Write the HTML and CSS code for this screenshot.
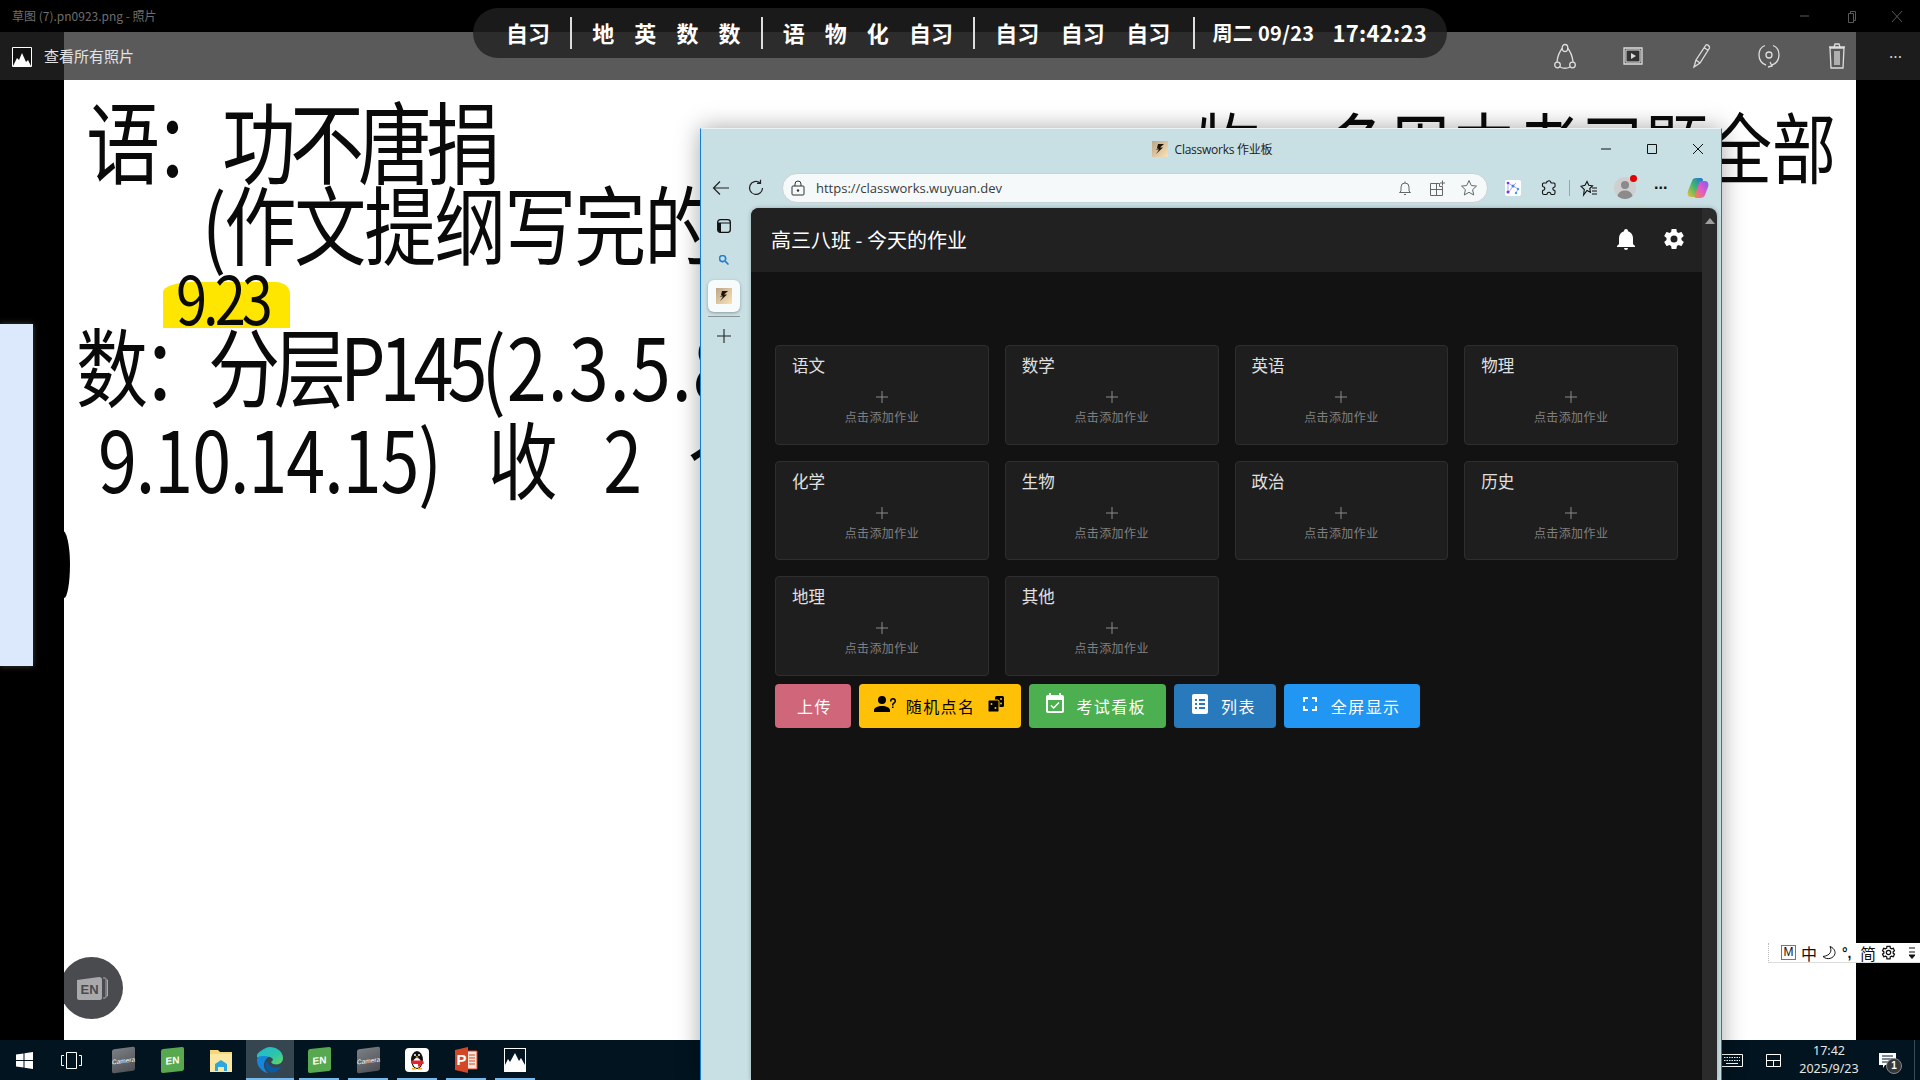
FILE: index.html
```html
<!DOCTYPE html>
<html lang="zh-CN">
<head>
<meta charset="utf-8">
<title>Classworks 作业板</title>
<link rel="stylesheet" href="styles.css">
</head>
<body>
<div class="desk">
  <div class="photos">
    <div class="ph-title">
      <span class="ph-name">草图 (7).pn0923.png - 照片</span>
      <div class="ph-ctrl">
        <svg width="46" height="32" viewBox="0 0 46 32"><path d="M18 16h9" stroke="#5a5a5a" fill="none"/></svg>
        <svg width="46" height="32" viewBox="0 0 46 32"><path d="M20.500 13.500h5v9h-5zM22.500 13.500v-2h5v9h-2" stroke="#5a5a5a" fill="none"/></svg>
        <svg width="46" height="32" viewBox="0 0 46 32"><path d="M18 11l10 11M28 11l-10 11" stroke="#5a5a5a" fill="none"/></svg>
      </div>
    </div>
    <div class="ph-bar">
      <div class="ph-side ph-left">
        <svg width="20" height="20" viewBox="0 0 20 20"><path d="M.5 .5h19v19H.5z" fill="#111" stroke="#fff"/><path d="M1 19l4-8 2 2 3-7 4 9 2-2 3 6z" fill="#fff"/></svg>
        <span class="ph-all">查看所有照片</span>
      </div>
      <div class="ph-mid">
        <svg class="tool" width="24" height="28" viewBox="0 0 24 28"><path d="M9.500 6C6 10 4.500 15 4 20M14.500 6C18 10 19.500 15 20 20M7 25c3 1.500 7 1.500 10 0" stroke="#ddd" fill="none" stroke-width="1.300"/><ellipse cx="12" cy="6" rx="2.800" ry="3.500" stroke="#ddd" fill="none" stroke-width="1.300"/><circle cx="4.500" cy="23" r="2.800" stroke="#ddd" fill="none" stroke-width="1.300"/><circle cx="19.500" cy="23" r="2.800" stroke="#ddd" fill="none" stroke-width="1.300"/></svg>
        <svg class="tool" width="24" height="28" viewBox="0 0 24 28"><path d="M3 6h18v16H3z" stroke="#ddd" fill="none" stroke-width="1.300"/><path d="M5 8h14v12H5z" fill="#333" stroke="#ddd"/><path d="M10 11l5 3-5 3z" fill="#ddd"/></svg>
        <svg class="tool" width="24" height="28" viewBox="0 0 24 28"><path d="M5 25l2-7L17 3c1-1 4 1 3.500 3L11 21zM7 18l4 3M15.500 6l4 2.500" stroke="#ddd" fill="none" stroke-width="1.300"/></svg>
        <svg class="tool" width="24" height="28" viewBox="0 0 24 28"><path d="M16 3.500C20 5 22 9 22 13c0 5-3 9-7 10M8 3.500C4 5 2 9 2 13c0 5 3 9 7 10M13 20l2 4-4 1" stroke="#ddd" fill="none" stroke-width="1.300"/><circle cx="12" cy="13" r="3" stroke="#ddd" fill="none" stroke-width="1.300"/></svg>
        <svg class="tool" width="24" height="28" viewBox="0 0 24 28"><path d="M5 6h14l-1 20H6zM4 5h16M9 5l1-3h4l1 3M10 9v14M12 9v14M14 9v14" stroke="#ddd" fill="none" stroke-width="1.300"/></svg>
      </div>
      <div class="ph-side ph-right"><span class="ph-more">...</span></div>
    </div>
    <div class="ph-view">
      <div class="board">
        <span class="ink ink-1">语：功不唐捐</span>
        <span class="ink ink-2">(作文提纲写完的</span>
        <span class="mark"></span>
        <span class="ink ink-date">9.23</span>
        <span class="ink ink-3">数：分层P145<span class="ink-wide">(2.3.5.8</span></span>
        <span class="ink ink-4">9.10.14.15) 收 2 个</span>
        <span class="ink ink-5">物：多周中考习题全部</span>
        <span class="en-ball">
          <svg width="34" height="30" viewBox="0 0 34 30"><path d="M28 5h2a1 1 0 0 1 1 1v18a1 1 0 0 1-1 1h-2M31.500 7h1v16h-1" stroke="#a9a9ab" fill="none"/><path d="M2 7l22-3c2 0 3 1 3 3v18c0 1-1 2-2 2H4c-1 0-2-1-2-2z" fill="#a9a9ab"/><text class="en-ball-t" x="14.500" y="21" text-anchor="middle">EN</text></svg>
        </span>
      </div>
    </div>
    <div class="taskbar">
      <div class="tb-btn">
        <svg width="17" height="17" viewBox="0 0 17 17"><path d="M0 2.500L7.500 1.400v6.600H0zM8.500 1.300L17 0v8H8.500zM0 9h7.500v6.600L0 14.500zM8.500 9H17v8l-8.500-1.300z" fill="#fff"/></svg>
      </div>
      <div class="tb-btn">
        <svg width="21" height="17" viewBox="0 0 21 17"><path d="M5.500 .5h10v16h-10zM3 3.500H.5v10H3M18 3.500h2.500v10H18" stroke="#fff" fill="none"/></svg>
      </div>
      <div class="tb-btn"><span class="tile-cam">Camera</span></div>
      <div class="tb-btn"><span class="tile-en">EN</span></div>
      <div class="tb-btn">
        <svg width="22" height="24" viewBox="0 0 22 24"><path d="M0 2h8l2 2h12v20H0z" fill="#f5d77b"/><path d="M0 6h22v18H0z" fill="#fbe6a2"/><path d="M5 23v-7l6-4 6 4v7h-3v-4H8v4z" fill="#2ea7e0"/></svg>
      </div>
      <div class="tb-btn tb-on tb-active">
        <svg width="26" height="26" viewBox="0 0 24 24"><defs><linearGradient id="eg" x1="0" y1="0" x2="1" y2="1"><stop offset="0" stop-color="#1cb8d8"/><stop offset=".6" stop-color="#2ec6a8"/><stop offset="1" stop-color="#6ad85a"/></linearGradient></defs><path fill="#0b5aa8" d="M21.860 17.860q.14 0 .25.12.1.13.1.25t-.11.33l-.32.46-.43.53-.44.5q-.21.25-.38.42l-.22.23q-.58.53-1.340 1.040-.76.51-1.600.91-.86.4-1.740.64t-1.670.24q-.9 0-1.690-.28-.8-.28-1.480-.78-.68-.5-1.220-1.170-.53-.66-.92-1.440-.38-.77-.58-1.600-.2-.83-.2-1.670 0-1 .32-1.960.33-.97.87-1.800.14.95.55 1.770.41.82 1.020 1.500.6.68 1.380 1.210.78.54 1.640.9.86.36 1.770.56.92.2 1.800.2 1.120 0 2.180-.24 1.060-.23 2.060-.72l.2-.1.2-.05z"/><path fill="#1586dc" d="M6.360 16.590q0 1.100.27 2.150.27 1.060.78 2.030.51.96 1.240 1.770.74.82 1.660 1.400-1.470-.2-2.800-.74-1.330-.55-2.480-1.370-1.150-.83-2.080-1.900-.92-1.070-1.580-2.330T.36 14.940Q0 13.540 0 12.060q0-.81.32-1.490.31-.68.83-1.230.53-.55 1.200-.96.66-.4 1.350-.66.74-.27 1.500-.39.78-.12 1.550-.12.7 0 1.420.1.72.12 1.400.35.68.23 1.320.57.63.35 1.160.83-.35 0-.7.07-.33.07-.65.23v-.02q-.63.28-1.200.74-.57.46-1.050 1.040-.48.58-.87 1.260-.38.67-.65 1.390-.27.71-.42 1.440-.15.72-.15 1.380z"/><path fill="url(#eg)" d="M11.960.06q1.700 0 3.330.39 1.630.38 3.070 1.150 1.430.77 2.620 1.930 1.180 1.160 1.980 2.700.49.94.76 1.960.28 1 .28 2.080 0 .89-.23 1.700-.24.8-.69 1.480-.45.68-1.100 1.220-.64.53-1.450.88-.54.24-1.110.36-.58.13-1.160.13-.42 0-.97-.03-.54-.03-1.100-.12-.55-.09-1.090-.25-.53-.17-.95-.43-.42-.28-.7-.6-.26-.34-.26-.71 0-.3.18-.56.18-.26.39-.44.21-.18.4-.27.18-.1.2-.15.3-.3.3-.7 0-.67-.5-1.200-.5-.52-1.300-.92-.8-.41-1.800-.69-1-.28-2-.43-.98-.15-1.880-.2-.9-.06-1.500-.06-1.130 0-2.260.23-1.140.22-2.180.67t-1.950 1.100q-.9.65-1.630 1.500.6-2.260 1.830-4.130 1.220-1.860 2.970-3.200Q6.400 1.600 8.260.86q1.870-.74 3.700-.8z"/></svg>
      </div>
      <div class="tb-btn tb-on"><span class="tile-en">EN</span></div>
      <div class="tb-btn tb-on"><span class="tile-cam">Camera</span></div>
      <div class="tb-btn tb-on">
        <svg width="24" height="24" viewBox="0 0 24 24"><rect width="24" height="24" rx="4" fill="#fff"/><ellipse cx="12" cy="12" rx="6" ry="9" fill="#111"/><ellipse cx="12" cy="15" rx="4" ry="5" fill="#fff"/><circle cx="10" cy="7" r="1" fill="#fff"/><circle cx="14" cy="7" r="1" fill="#fff"/><path d="M6 12.500h12l1 3-3 1-1 2h-2v-2.500H7z" fill="#e3262e"/><path d="M10.500 9l1.500-1 1.500 1-1.500 1z" fill="#f5a623"/><path d="M7 20h4v1.500H7zM13 20h4v1.500h-4z" fill="#f5a623"/></svg>
      </div>
      <div class="tb-btn tb-on">
        <svg width="23" height="26" viewBox="0 0 23 26"><path d="M9 4h13v18H9z" fill="#fbe4da" stroke="#d24726"/><path d="M14 8h6M14 11h6M14 14h6M14 17h6" stroke="#d24726"/><path d="M0 3l13-3v26L0 23z" fill="#d24726"/><text class="ppt-p" x="6.500" y="18" text-anchor="middle">P</text></svg>
      </div>
      <div class="tb-btn tb-on">
        <svg width="22" height="24" viewBox="0 0 22 24"><path d="M0 0h22v24H0z" fill="#fff"/><path d="M1 1h20v16l-4-7-2 3-4-8-5 9-2-3-3 6z" fill="#02141f"/></svg>
      </div>
      <div class="tb-tray">
        <svg width="22" height="13" viewBox="0 0 22 13"><path d="M.5 .5h21v12H.5z" stroke="#fff" fill="none"/><path d="M3 3.500h16M3 6.500h16" stroke="#fff" stroke-dasharray="1.500 1"/><path d="M5 9.500h12" stroke="#fff"/></svg>
        <svg class="tray-pad" width="15" height="13" viewBox="0 0 15 13"><path d="M.5 .5h14v12H.5zM.5 6.500h14M7.500 6.500v6" stroke="#fff" fill="none"/></svg>
        <div class="clock"><span>17:42</span><span>2025/9/23</span></div>
        <div class="note">
          <svg width="17" height="15" viewBox="0 0 17 15"><path d="M0 0h17v12H6l-2 3v-3H0z" fill="#fff"/><path d="M3 3h11M3 6h11M3 9h7" stroke="#02141f"/></svg>
          <span class="note-badge">1</span>
        </div>
        <span class="tray-line"></span>
      </div>
    </div>
  </div>

  <div class="side-tab"></div>
  <div class="blot"></div>

  <div class="capsule">
    <span class="cls two">自习</span><i class="sep"></i>
    <span class="cls">地</span><span class="cls">英</span><span class="cls">数</span><span class="cls">数</span><i class="sep"></i>
    <span class="cls">语</span><span class="cls">物</span><span class="cls">化</span><span class="cls two">自习</span><i class="sep"></i>
    <span class="cls two">自习</span><span class="cls two">自习</span><span class="cls two">自习</span><i class="sep sep-last"></i>
    <span class="date">周二 09/23</span><span class="time">17:42:23</span>
  </div>

  <div class="ime">
    <span class="ime-m">M</span><span class="ime-c">中</span>
    <svg width="14" height="14" viewBox="0 0 14 14"><path d="M8 .5c2 4 1 9-7 10 4 4 11 2 12-3 .5-3-2-6-5-7z" fill="none" stroke="#111"/></svg>
    <span class="ime-p">°,</span><span class="ime-c">简</span>
    <svg width="15" height="15" viewBox="0 0 24 24"><path fill="none" stroke="#111" stroke-width="2" d="M12,15.500A3.500,3.500 0 1,1 12,8.500A3.500,3.500 0 1,1 12,15.500M19.430,12.970C19.500,12.300 19.500,11.700 19.430,11L21.540,9.370L19.660,5.270L16.560,6.050C16,5.660 15.500,5.320 14.870,5.070L14.500,2H9.500L9.130,5.070C8.500,5.320 8,5.660 7.440,6.050L4.340,5.270L2.460,9.370L4.570,11C4.500,11.700 4.500,12.300 4.570,12.970L2.460,14.630L4.340,18.730L7.440,17.940C8,18.340 8.500,18.680 9.130,18.930L9.500,22H14.500L14.870,18.930C15.500,18.670 16,18.340 16.560,17.940L19.660,18.730L21.540,14.630Z"/></svg>
    <svg class="ime-menu" width="6" height="12" viewBox="0 0 6 12"><path d="M0 1h6M0 5h6M0 8h6l-3 3.500z" fill="#111" stroke="#111"/></svg>
  </div>

  <div class="browser">
    <div class="br-title">
      <svg class="fav" width="16" height="16" viewBox="0 0 16 16"><defs><linearGradient id="fa" x1="0" y1="0" x2="1" y2="1"><stop offset="0" stop-color="#bda689"/><stop offset="1" stop-color="#fbe2b6"/></linearGradient></defs><rect width="16" height="16" fill="url(#fa)"/><path d="M6 3h6L8 6.500h3L4 13l3-4.500H3.500l3-1.500H5z" fill="#1a1408"/></svg>
      <span class="br-name">Classworks 作业板</span>
      <div class="br-ctrl">
        <svg width="46" height="20" viewBox="0 0 46 20"><path d="M18 10h10" stroke="#111" fill="none"/></svg>
        <svg width="46" height="20" viewBox="0 0 46 20"><path d="M18.500 5.500h9v9h-9z" stroke="#111" fill="none"/></svg>
        <svg width="46" height="20" viewBox="0 0 46 20"><path d="M18 5l10 10M28 5L18 15" stroke="#111" fill="none"/></svg>
      </div>
    </div>
    <div class="br-tools">
      <svg width="18" height="16" viewBox="0 0 18 16"><path d="M17 8H2M8 1.500L1.500 8 8 14.500" stroke="#222" fill="none" stroke-width="1.200"/></svg>
      <svg class="reload" width="18" height="18" viewBox="0 0 18 18"><path d="M15.500 9A6.500 6.500 0 1 1 13 3.800M13.500 .8v3.500H10" stroke="#222" fill="none" stroke-width="1.200"/></svg>
      <div class="addr">
        <svg width="14" height="16" viewBox="0 0 14 16"><path d="M2 6h10a1 1 0 0 1 1 1v7a1 1 0 0 1-1 1H2a1 1 0 0 1-1-1V7a1 1 0 0 1 1-1zM4 6V4a3 3 0 0 1 6 0v2" stroke="#333" fill="none"/><circle cx="7" cy="10.500" r="1.200" fill="#333"/></svg>
        <span class="url">https://classworks.wuyuan.dev</span>
        <span class="addr-gap"></span>
        <svg width="14" height="16" viewBox="0 0 14 16"><path d="M3 11V7a4 4 0 0 1 8 0v4l1.500 1.500h-11zM6 14.500h2M7 3V1.500" stroke="#666" fill="none"/></svg>
        <svg class="addr-i addr-first" width="16" height="16" viewBox="0 0 16 16"><path d="M.5 3.500h9v3h3v9h-12zM.5 9.500h12M6.500 3.500v12M12.500 .5v5M10 3h5" stroke="#666" fill="none"/></svg>
        <svg class="addr-i" width="18" height="18" viewBox="0 0 18 18"><path d="M9 1.500l2.300 5 5.200.6-3.900 3.600 1.100 5.300L9 13.300 4.300 16l1.100-5.300L1.500 7.100l5.200-.6z" stroke="#666" fill="none"/></svg>
      </div>
      <svg class="ext-net" width="16" height="16" viewBox="0 0 16 16"><rect width="16" height="16" rx="2" fill="#fff"/><path d="M3 3l5 3-4 6M8 6l5 3-2 4M3 3v9M8 6l3-3" stroke="#7b6ce6" stroke-width=".6" fill="none"/><circle cx="3" cy="3" r="1.300" fill="#6a3de8"/><circle cx="8" cy="6" r="1.500" fill="#3d86f5"/><circle cx="3" cy="12" r="1.500" fill="#6a3de8"/><circle cx="13" cy="9" r="1.200" fill="#3d9cf5"/><circle cx="11" cy="13" r="1.200" fill="#3d9cf5"/></svg>
      <svg class="puzzle" width="16" height="16" viewBox="0 0 16 16"><path d="M6.500 1.500a2 2 0 0 1 3 0c.5 1 0 1.500 1 1.500h2.500c1 0 1 1 1 1v2.500c0 1-1 .5-1.500 1a1.500 1.500 0 0 0 0 2.500c.5.500 1.500 0 1.500 1v2c0 .8-.8 1.500-1.500 1.500h-2c-1 0-.5-1-1-1.500a1.800 1.800 0 0 0-3 0c-.5.500 0 1.500-1 1.500H3c-.8 0-1.500-.7-1.500-1.500V11c0-1 1-.5 1.500-1a1.800 1.800 0 0 0 0-3c-.5-.5-1.500 0-1.500-1V4c0-.5.500-1 1-1h2.500c1 0 .5-.5 1-1.500z" stroke="#111" fill="none" stroke-width="1.100"/></svg>
      <i class="tool-sep"></i>
      <svg class="favs" width="18" height="17" viewBox="0 0 18 17"><path d="M7 1.500l1.800 3.800 3.700.5-2.700 2.700.6 3.700L7 10.500 3.600 15l.7-5.500L1 6.300l4-1zM12 8h5M12 11h5M12 14h5" stroke="#111" fill="none" stroke-width="1.100"/></svg>
      <div class="avatar"><svg width="22" height="22" viewBox="0 0 22 22"><circle cx="11" cy="11" r="11" fill="#cfcfcf"/><circle cx="11" cy="8" r="4" fill="#8b8b8b"/><path d="M3.500 19c1-4 4-5.500 7.500-5.500s6.500 1.500 7.500 5.500c-2 2-5 3-7.500 3s-5.500-1-7.500-3z" fill="#8b8b8b"/></svg><span class="red-dot"></span></div>
      <span class="more">...</span>
      <svg class="copilot" width="22" height="22" viewBox="0 0 22 22"><defs><linearGradient id="c1" x1="0" y1="1" x2="1" y2="0"><stop offset="0" stop-color="#f2c035"/><stop offset=".5" stop-color="#3fb56e"/><stop offset="1" stop-color="#1f6fe0"/></linearGradient><linearGradient id="c2" x1="0" y1="1" x2="1" y2="0"><stop offset="0" stop-color="#f58a3c"/><stop offset=".5" stop-color="#e05ac9"/><stop offset="1" stop-color="#7a5df0"/></linearGradient></defs><path d="M9 1h5c1 0 2 1 2 2l-4 12c-.5 2-2 5-4 5H4c-3 0-4-3-3-6L5 4c.5-2 2-3 4-3z" fill="url(#c1)"/><path d="M13 21H9c-1 0-2-1-1-3l4-12c.5-1 1-2 3-2h3c3 0 4 3 3 6l-3 8c-.5 2-2.500 3-5 3z" fill="url(#c2)"/></svg>
    </div>
    <div class="br-body">
      <div class="br-side">
        <svg width="14" height="14" viewBox="0 0 14 14"><rect x=".7" y=".7" width="12.600" height="12.600" rx="2.500" fill="#c8dfe3" stroke="#111" stroke-width="1.300"/><path d="M1 4h12" stroke="#111"/><path d="M1 4h3v9H3a2 2 0 0 1-2-2z" fill="#111"/></svg>
        <svg class="side-search" width="10" height="10" viewBox="3 3 18 18"><path fill="#1f7fd0" stroke="#1f7fd0" d="M9.500,3A6.500,6.500 0 0,1 16,9.500C16,11.110 15.410,12.590 14.440,13.730L14.710,14H15.500L20.500,19L19,20.500L14,15.500V14.710L13.730,14.440C12.590,15.410 11.110,16 9.500,16A6.500,6.500 0 0,1 3,9.500A6.500,6.500 0 0,1 9.500,3M9.500,5C7,5 5,7 5,9.500C5,12 7,14 9.500,14C12,14 14,12 14,9.500C14,7 12,5 9.500,5Z"/></svg>
        <div class="side-tile"><svg width="16" height="16" viewBox="0 0 16 16"><rect width="16" height="16" fill="url(#fa)"/><path d="M6 3h6L8 6.500h3L4 13l3-4.500H3.500l3-1.500H5z" fill="#1a1408"/></svg></div>
        <i class="side-line"></i>
        <svg class="side-plus" width="14" height="14" viewBox="0 0 14 14"><path d="M7 0v14M0 7h14" stroke="#222" stroke-width="1.100" fill="none"/></svg>
      </div>
      <div class="panel">
        <div class="app">
          <header class="appbar">
            <h1 class="app-title">高三八班 - 今天的作业</h1>
            <svg class="app-i" width="24" height="24" viewBox="0 0 24 24"><path fill="#fff" d="M21,19V20H3V19L5,17V11C5,7.900 7.030,5.170 10,4.290C10,4.190 10,4.100 10,4A2,2 0 0,1 12,2A2,2 0 0,1 14,4C14,4.100 14,4.190 14,4.290C16.970,5.170 19,7.900 19,11V17L21,19M14,21A2,2 0 0,1 12,23A2,2 0 0,1 10,21"/></svg>
            <svg class="app-i" width="24" height="24" viewBox="0 0 24 24"><path fill="#fff" d="M12,15.500A3.500,3.500 0 0,1 8.500,12A3.500,3.500 0 0,1 12,8.500A3.500,3.500 0 0,1 15.500,12A3.500,3.500 0 0,1 12,15.500M19.430,12.970C19.470,12.650 19.500,12.330 19.500,12C19.500,11.670 19.470,11.340 19.430,11L21.540,9.370C21.730,9.220 21.780,8.950 21.660,8.730L19.660,5.270C19.540,5.050 19.270,4.960 19.050,5.050L16.560,6.050C16.040,5.660 15.500,5.320 14.870,5.070L14.500,2.420C14.460,2.180 14.250,2 14,2H10C9.750,2 9.540,2.180 9.500,2.420L9.130,5.070C8.500,5.320 7.960,5.660 7.440,6.050L4.950,5.050C4.730,4.960 4.460,5.050 4.340,5.270L2.340,8.730C2.210,8.950 2.270,9.220 2.460,9.370L4.570,11C4.530,11.340 4.500,11.670 4.500,12C4.500,12.330 4.530,12.650 4.570,12.970L2.460,14.630C2.270,14.780 2.210,15.050 2.340,15.270L4.340,18.730C4.460,18.950 4.730,19.030 4.950,18.950L7.440,17.940C7.960,18.340 8.500,18.680 9.130,18.930L9.500,21.580C9.540,21.820 9.750,22 10,22H14C14.250,22 14.460,21.820 14.500,21.580L14.870,18.930C15.500,18.670 16.040,18.340 16.560,17.940L19.050,18.950C19.270,19.030 19.540,18.950 19.660,18.730L21.660,15.270C21.780,15.050 21.730,14.780 21.540,14.630L19.430,12.970Z"/></svg>
          </header>
          <main class="main">
            <div class="grid">
              <section class="card"><h2>语文</h2><div class="add"><svg width="12" height="12" viewBox="0 0 12 12"><path d="M6 0v12M0 6h12"/></svg><span>点击添加作业</span></div></section>
              <section class="card"><h2>数学</h2><div class="add"><svg width="12" height="12" viewBox="0 0 12 12"><path d="M6 0v12M0 6h12"/></svg><span>点击添加作业</span></div></section>
              <section class="card"><h2>英语</h2><div class="add"><svg width="12" height="12" viewBox="0 0 12 12"><path d="M6 0v12M0 6h12"/></svg><span>点击添加作业</span></div></section>
              <section class="card"><h2>物理</h2><div class="add"><svg width="12" height="12" viewBox="0 0 12 12"><path d="M6 0v12M0 6h12"/></svg><span>点击添加作业</span></div></section>
              <section class="card"><h2>化学</h2><div class="add"><svg width="12" height="12" viewBox="0 0 12 12"><path d="M6 0v12M0 6h12"/></svg><span>点击添加作业</span></div></section>
              <section class="card"><h2>生物</h2><div class="add"><svg width="12" height="12" viewBox="0 0 12 12"><path d="M6 0v12M0 6h12"/></svg><span>点击添加作业</span></div></section>
              <section class="card"><h2>政治</h2><div class="add"><svg width="12" height="12" viewBox="0 0 12 12"><path d="M6 0v12M0 6h12"/></svg><span>点击添加作业</span></div></section>
              <section class="card"><h2>历史</h2><div class="add"><svg width="12" height="12" viewBox="0 0 12 12"><path d="M6 0v12M0 6h12"/></svg><span>点击添加作业</span></div></section>
              <section class="card"><h2>地理</h2><div class="add"><svg width="12" height="12" viewBox="0 0 12 12"><path d="M6 0v12M0 6h12"/></svg><span>点击添加作业</span></div></section>
              <section class="card"><h2>其他</h2><div class="add"><svg width="12" height="12" viewBox="0 0 12 12"><path d="M6 0v12M0 6h12"/></svg><span>点击添加作业</span></div></section>
            </div>
            <div class="actions">
              <button class="btn b-pink"><span>上传</span></button>
              <button class="btn b-amber">
                <svg width="24" height="24" viewBox="0 0 24 24"><path fill="#000" d="M13,8A4,4 0 0,1 9,12A4,4 0 0,1 5,8A4,4 0 0,1 9,4A4,4 0 0,1 13,8M17,18V20H1V18C1,15.790 4.580,14 9,14C13.420,14 17,15.790 17,18M20.500,14.500V16H19V14.500H20.500M18.500,9.500H17V9A3,3 0 0,1 20,6A3,3 0 0,1 23,9C23,9.970 22.500,10.880 21.710,11.410L21.410,11.600C20.840,12 20.500,12.610 20.500,13.300V13.500H19V13.300C19,12.110 19.600,11 20.590,10.350L20.880,10.160C21.270,9.900 21.500,9.470 21.500,9A1.500,1.500 0 0,0 20,7.500A1.500,1.500 0 0,0 18.500,9V9.500Z"/></svg>
                <span class="lbl">随机点名</span>
                <svg class="dice" width="16" height="16" viewBox="0 0 16 16"><rect x="7" y="0" width="9" height="11" rx="1.500" fill="#000"/><rect x="0" y="4" width="11" height="12" rx="1.500" fill="#000" stroke="#ffc107"/><circle cx="3.500" cy="8" r="1" fill="#ffc107"/><circle cx="7.500" cy="12" r="1" fill="#ffc107"/><circle cx="13" cy="3" r="1" fill="#ffc107"/><circle cx="13" cy="7.500" r="1" fill="#ffc107"/></svg>
              </button>
              <button class="btn b-green">
                <svg width="24" height="24" viewBox="0 0 24 24"><path fill="#fff" d="M19,19H5V8H19M19,3H18V1H16V3H8V1H6V3H5C3.890,3 3,3.900 3,5V19A2,2 0 0,0 5,21H19A2,2 0 0,0 21,19V5A2,2 0 0,0 19,3M16.530,11.060L15.470,10L10.590,14.880L8.470,12.760L7.410,13.820L10.590,17L16.530,11.060Z"/></svg>
                <span class="lbl">考试看板</span>
              </button>
              <button class="btn b-blue">
                <svg width="24" height="24" viewBox="0 0 24 24"><path fill="#fff" fill-rule="evenodd" d="M6 2h12a2 2 0 0 1 2 2v16a2 2 0 0 1-2 2H6a2 2 0 0 1-2-2V4a2 2 0 0 1 2-2zM7 7v2h2V7zM11 7v2h6V7zM7 11v2h2v-2zM11 11v2h6v-2zM7 15v2h2v-2zM11 15v2h6v-2z"/></svg>
                <span class="lbl">列表</span>
              </button>
              <button class="btn b-sky">
                <svg width="24" height="24" viewBox="0 0 24 24"><path fill="#fff" d="M5,5H10V7H7V10H5V5M14,5H19V10H17V7H14V5M17,14H19V19H14V17H17V14M10,17V19H5V14H7V17H10Z"/></svg>
                <span class="lbl">全屏显示</span>
              </button>
            </div>
          </main>
        </div>
        <div class="scroll"><i class="scroll-up"></i></div>
      </div>
    </div>
  </div>
</div>
</body>
</html>
```
FILE: styles.css
```css
* { box-sizing: border-box; }
html, body { margin: 0; padding: 0; background: #000; }
body { font-family: "Noto Sans CJK SC", "Noto Sans", sans-serif; }
.desk { position: relative; width: 1920px; height: 1080px; overflow: hidden; background: #000; }

/* photos app */
.photos { display: flex; flex-direction: column; height: 100%; }
.ph-title { height: 32px; display: flex; align-items: center; justify-content: space-between; padding-left: 12px; }
.ph-name { font-size: 12px; color: #6e6e6e; margin-top: -2px; }
.ph-ctrl { display: flex; }
.ph-bar { height: 48px; display: flex; background: #5a5a5a; }
.ph-side { width: 64px; background: #1c1c1c; display: flex; align-items: center; position: relative; }
.ph-left { padding-left: 12px; padding-top: 2px; }
.ph-all { position: absolute; left: 44px; top: 13px; font-size: 15px; line-height: 22px; color: #e4e4e4; white-space: nowrap; }
.ph-right { justify-content: center; padding-left: 16px; }
.ph-more { color: #ccc; font: 700 12px "Liberation Sans", sans-serif; letter-spacing: 1px; margin-top: -4px; }
.ph-mid { flex: 1; display: flex; align-items: center; justify-content: flex-end; gap: 44px; padding-right: 7px; }
.ph-view { flex: 1; padding: 0 64px; min-height: 0; }
.board { position: relative; height: 100%; background: #fff; overflow: hidden; }
.ink { position: absolute; color: #0a0a0a; white-space: pre; line-height: 1; font-family: "Noto Sans CJK SC", sans-serif; transform: scaleY(1.2); }
.ink-1 { left: 22px; top: 22px; font-size: 74px; letter-spacing: -6px; }
.ink-2 { left: 138px; top: 106px; font-size: 72px; letter-spacing: -2px; }
.mark { position: absolute; left: 99px; top: 202px; width: 127px; height: 46px; background: #ffe600; border-radius: 30px 14px 0 0 / 10px 12px 0 0; }
.ink-date { left: 112px; top: 188px; font-size: 56px; letter-spacing: -4px; }
.ink-3 { left: 12px; top: 248px; font-size: 72px; letter-spacing: -6px; }
.ink-wide { letter-spacing: 1px; }
.ink-4 { left: 34px; top: 342px; font-size: 70px; letter-spacing: -1px; word-spacing: 32px; }
.ink-5 { left: 1132px; top: 32px; font-size: 64px; }
.en-ball { position: absolute; left: -4px; top: 877px; width: 63px; height: 62px; border-radius: 50%; background: #4a4b4f; display: flex; align-items: center; justify-content: center; }
.en-ball-t { font: 700 13px "Liberation Sans", sans-serif; fill: #4a4b4f; }

/* taskbar */
.taskbar { height: 40px; background: #02141f; display: flex; padding-left: 0; gap: 1px; position: relative; }
.tb-btn { width: 48px; height: 40px; display: flex; align-items: center; justify-content: center; position: relative; }
.tb-btn:nth-child(2) { margin-right: 1px; padding-right: 3px; }
.tb-on::after { content: ""; position: absolute; left: 4px; right: 4px; bottom: 0; height: 2px; background: #76b9ed; }
.tb-active { background: #364650; }
.tb-active::after { left: 0; right: 0; }
.tile-cam { width: 23px; height: 24px; background: linear-gradient(160deg, #7b7f84, #4c5055); border-radius: 2px; font: 6.500px "Liberation Sans", sans-serif; color: #fff; display: flex; align-items: center; justify-content: center; transform: skewY(-8deg); }
.tile-en { width: 23px; height: 24px; background: #57a84f; border-radius: 2px; font: 700 10px "Liberation Sans", sans-serif; color: #fff; display: flex; align-items: center; justify-content: center; transform: skewY(-6deg); }
.ppt-p { font: 700 15px "Liberation Sans", sans-serif; fill: #fff; }
.tb-tray { margin-left: auto; display: flex; align-items: center; color: #e6e6e6; }
.tray-pad { margin-left: 23px; }
.clock { width: 78px; margin-left: 9px; display: flex; flex-direction: column; align-items: center; font: 12.500px/18px "Noto Sans", sans-serif; }
.note { position: relative; width: 17px; height: 15px; margin-left: 11px; margin-right: 24px; }
.note svg { display: block; }
.note-badge { position: absolute; left: 7px; top: 5px; width: 16px; height: 16px; border-radius: 50%; background: #33393d; border: 1px solid #888; color: #fff; font: 700 10px/14px "Liberation Sans", sans-serif; text-align: center; }
.tray-line { position: absolute; right: 5px; top: 0; width: 1px; height: 40px; background: #3a4a55; }

/* left tab + blot */
.side-tab { position: absolute; left: 0; top: 324px; width: 33px; height: 342px; background: #dce9fd; box-shadow: 0 0 6px rgba(255, 255, 255, .25); }
.blot { position: absolute; left: 60px; top: 530px; width: 10px; height: 68px; background: #000; border-radius: 0 80% 60% 0 / 0 50% 50% 0; }

/* capsule */
.capsule { position: absolute; left: 473px; top: 8px; width: 974px; height: 50px; border-radius: 25px; background: rgba(32, 32, 32, .8); display: flex; align-items: center; gap: 20.100px; padding: 0 0 2px 33px; color: #fff; font-weight: 700; font-size: 22px; }
.cls { width: 22px; line-height: 1; }
.cls.two { width: 44px; }
.cls.two + .cls.two { margin-left: 1.500px; }
.sep { width: 2px; height: 32px; background: #ddd; margin-top: 2px; }
.sep-last { margin-left: 3px; }
.date { font-size: 20px; letter-spacing: .3px; margin-left: -3px; white-space: nowrap; }
.time { font-size: 22px; margin-left: -2px; white-space: nowrap; letter-spacing: .3px; }

/* ime */
.ime { position: absolute; left: 1768px; top: 943px; width: 152px; height: 20px; background: #fff; border-bottom: 1px solid #ddd; border-left: 1px dotted #bbb; display: flex; align-items: center; padding-left: 12px; color: #111; gap: 6px; }
.ime-m { width: 15px; height: 15px; border: 1px solid #777; font: 12px/13px "Liberation Sans", sans-serif; text-align: center; }
.ime-c { font-size: 16px; line-height: 1; margin: 0 -1px; }
.ime-p { font: 700 14px/1 "Liberation Sans", sans-serif; width: 13px; }
.ime-menu { margin-left: 7px; }

/* browser */
.browser { position: absolute; left: 700px; top: 128px; width: 1022px; height: 952px; background: #c8dfe3; border-left: 1px solid #0f7ed6; border-right: 1px solid #0f7ed6; border-top: 1px solid #e8f2f4; box-shadow: 0 0 22px rgba(0, 0, 0, .35); display: flex; flex-direction: column; }
.br-title { height: 39px; display: flex; align-items: center; justify-content: center; position: relative; padding-left: 2px; }
.fav { margin-right: 7px; }
.br-name { font: 12px "Open Sans", "Noto Sans CJK SC", sans-serif; letter-spacing: -.25px; color: #222; }
.br-ctrl { position: absolute; right: 0; top: 10px; display: flex; }
.br-tools { height: 40px; display: flex; align-items: center; padding-left: 11px; }
.reload { margin-left: 17px; }
.addr { width: 706px; height: 30px; margin-left: 17px; border-radius: 15px; background: #f5f9fa; border: 1px solid #c9d2d5; border-width: 1px 1px 1.500px 1px; display: flex; align-items: center; padding-left: 8px; padding-right: 9px; }
.url { margin-left: 11px; font: 13px "Open Sans", sans-serif; color: #3a3a3a; }
.addr-gap { flex: 1; }
.addr-i { margin-left: 14px; }
.addr-first { margin-left: 18px; }
.ext-net { margin-left: 17px; }
.puzzle { margin-left: 20px; }
.tool-sep { width: 1px; height: 16px; background: #9aa5a8; margin-left: 12px; }
.favs { margin-left: 10px; }
.avatar { position: relative; width: 22px; height: 22px; margin-left: 16px; }
.avatar svg { display: block; }
.red-dot { position: absolute; right: -1px; top: -2px; width: 7px; height: 7px; border-radius: 50%; background: #e30000; }
.more { margin-left: 18px; width: 16px; font: 700 16px/1 "Liberation Sans", sans-serif; color: #111; margin-top: -8px; }
.copilot { margin-left: 17px; }
.br-body { flex: 1; display: flex; min-height: 0; }
.br-side { width: 50px; display: flex; flex-direction: column; align-items: center; padding: 11px 4px 0 0; }
.side-search { margin-top: 22px; }
.side-tile { width: 32px; height: 32px; margin-top: 15px; border-radius: 6px; background: #f7fbfc; box-shadow: 0 1px 3px rgba(0, 0, 0, .3); display: flex; align-items: center; justify-content: center; flex: none; }
.side-line { width: 32px; height: 1px; background: #8a9396; margin-top: 4px; }
.side-plus { margin-top: 12px; }
.panel { width: 966px; display: flex; border-radius: 8px 8px 0 0; overflow: hidden; box-shadow: 0 0 4px rgba(0, 0, 0, .25); }
.app { width: 951px; background: #121212; display: flex; flex-direction: column; }
.appbar { height: 64px; flex: none; background: #212121; display: flex; align-items: center; padding: 0 16px 0 20px; }
.app-title { margin: -2px auto 0 0; font-size: 20px; font-weight: 400; color: #fff; }
.app-i { margin-left: 24px; margin-top: -2px; }
.main { flex: 1; padding: 73px 24px 0; }
.grid { display: grid; grid-template-columns: repeat(4, 1fr); gap: 16px; grid-auto-rows: 99.500px; }
.card { background: #1e1e1e; border: 1px solid #2e2e2e; border-radius: 4px; padding: 7px 16px; }
.card h2 { margin: 0; font-size: 16.500px; font-weight: 400; line-height: 24px; color: #e0e0e0; }
.add { display: flex; flex-direction: column; align-items: center; margin-top: 14px; }
.add svg { stroke: #8a8a8a; fill: none; }
.add span { margin-top: 5px; font-size: 12px; line-height: 18px; letter-spacing: .4px; color: #808080; }
.actions { display: flex; gap: 8px; margin-top: 8.500px; }
.btn { height: 44px; border: 0; border-radius: 4px; display: flex; align-items: center; padding: 0 20px 0 14px; font: 400 16px "Noto Sans CJK SC", sans-serif; letter-spacing: 1.400px; color: #fff; }
.btn svg { margin-bottom: 5px; flex: none; }
.btn .lbl { margin-left: 9px; }
.b-pink { background: #cf6679; padding: 0 19px 0 22px; }
.b-amber { background: #ffc107; color: #000; padding-right: 17px; }
.b-amber .dice { margin-left: 13px; }
.b-green { background: #4caf50; }
.b-blue { background: #2979bd; }
.b-sky { background: #2196f3; }
.scroll { width: 15px; background: #2b2b2b; position: relative; }
.scroll-up { position: absolute; left: 3px; top: 10px; border: 5px solid transparent; border-top: 0; border-bottom: 6px solid #9e9e9e; }
```
